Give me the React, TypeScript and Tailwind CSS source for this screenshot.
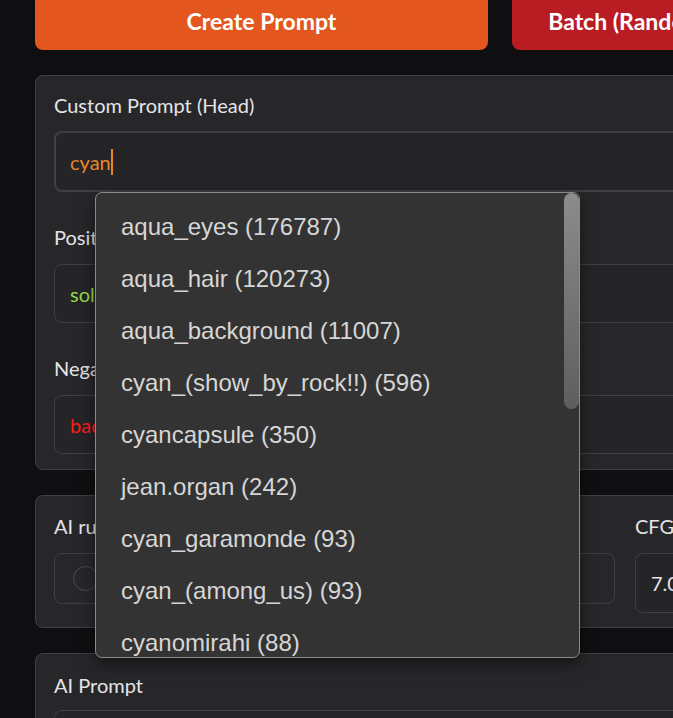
import React from "react";

const tags = [
  "aqua_eyes (176787)",
  "aqua_hair (120273)",
  "aqua_background (11007)",
  "cyan_(show_by_rock!!) (596)",
  "cyancapsule (350)",
  "jean.organ (242)",
  "cyan_garamonde (93)",
  "cyan_(among_us) (93)",
  "cyanomirahi (88)",
  "cyan_(pokemon) (71)",
];

const ui = { fontFamily: "Lato, 'Noto Sans', sans-serif" };

const Label = ({ children }: { children: React.ReactNode }) => (
  <div className="h-[24px] text-[20px] leading-[24px] text-[#e4e4e7]" style={ui}>
    {children}
  </div>
);

const App = () => {
  return (
    <div className="w-[673px] h-[718px] overflow-hidden bg-[#0f0f11]">
      <div className="w-[1000px] pl-[35px] flex flex-col">
        {/* action buttons */}
        <div className="flex gap-[24px] mt-[-10px]">
          <button
            className="w-[453px] h-[60px] rounded-[8px] bg-[#e3571f] text-white text-[23px] font-bold pt-[2px]"
            style={ui}
          >
            Create Prompt
          </button>
          <button
            className="w-[234px] h-[60px] rounded-[8px] bg-[#b91c22] text-white text-[23px] font-bold pt-[2px] whitespace-nowrap"
            style={ui}
          >
            Batch (Random)
          </button>
        </div>

        {/* prompts */}
        <div className="mt-[25px] rounded-[8px] border border-[#3f3f46] bg-[#27272a] px-[18px] pt-[17px] pb-[15px]">
          <div className="relative">
            <Label>Custom Prompt (Head)</Label>
            <div className="mt-[14px] h-[61px] rounded-[8px] border-2 border-[#3f3f46] bg-[#252528] flex items-center pl-[14px]">
              <span className="text-[20px] text-[#ea862a]" style={ui}>cyan</span>
              <span className="w-[2px] h-[26px] bg-[#ea862a]" />
            </div>

            {/* autocomplete list */}
            <div className="absolute top-full left-[41px] z-10 w-[485px] h-[466px] overflow-hidden rounded-[7px] border border-[#8a8a8a] bg-[#333333] pt-[8px] shadow-[0_6px_16px_rgba(0,0,0,0.5)]">
              {tags.map((t) => (
                <div
                  key={t}
                  className="h-[52px] flex items-center pl-[25px] text-[24px] text-[#d6d6d6] whitespace-nowrap"
                  style={{ fontFamily: "'Liberation Sans', Arial, sans-serif" }}
                >
                  {t}
                </div>
              ))}
              <div className="absolute right-0 top-0 w-[15px] h-[216px] rounded-full bg-gradient-to-b from-[#8c8c8c] to-[#5e5e5e]" />
            </div>
          </div>

          <div className="mt-[33px]">
            <Label>Positive Prompt</Label>
          </div>
          <div className="mt-[15px] h-[59px] rounded-[8px] border border-[#3f3f46] bg-[#252528] flex items-center pl-[15px]">
            <span className="text-[20px] text-[#94dc44]" style={ui}>solo, 1girl, looking at viewer</span>
          </div>

          <div className="mt-[33px]">
            <Label>Negative Prompt</Label>
          </div>
          <div className="mt-[15px] h-[59px] rounded-[8px] border border-[#3f3f46] bg-[#252528] flex items-center pl-[15px]">
            <span className="text-[20px] text-[#ff1c1c]" style={ui}>bad anatomy, lowres</span>
          </div>
        </div>

        {/* generation options */}
        <div className="mt-[25px] rounded-[8px] border border-[#3f3f46] bg-[#27272a] px-[18px] pt-[18px] pb-[14px] flex gap-[20px]">
          <div className="w-[561px]">
            <Label>AI rule</Label>
            <div className="mt-[15px] h-[51px] rounded-[8px] border border-[#3f3f46] flex items-center pl-[18px]">
              <span className="w-[25px] h-[25px] rounded-full border border-[#4a4a52]" />
              <span className="ml-[10px] text-[20px] text-[#e4e4e7]" style={ui}>None</span>
            </div>
          </div>
          <div className="w-[300px]">
            <Label>CFG, Steps</Label>
            <div className="mt-[15px] h-[60px] rounded-[8px] border border-[#3f3f46] bg-[#252528] flex items-center pl-[15px]">
              <span className="text-[20px] text-[#e4e4e7]" style={ui}>7.0</span>
            </div>
          </div>
        </div>

        {/* ai prompt */}
        <div className="mt-[25px] rounded-[8px] border border-[#3f3f46] bg-[#27272a] px-[18px] pt-[19px] pb-[14px]">
          <Label>AI Prompt</Label>
          <div className="mt-[13px] h-[60px] rounded-[8px] border border-[#3f3f46] bg-[#252528]" />
        </div>
      </div>
    </div>
  );
};

export default App;
